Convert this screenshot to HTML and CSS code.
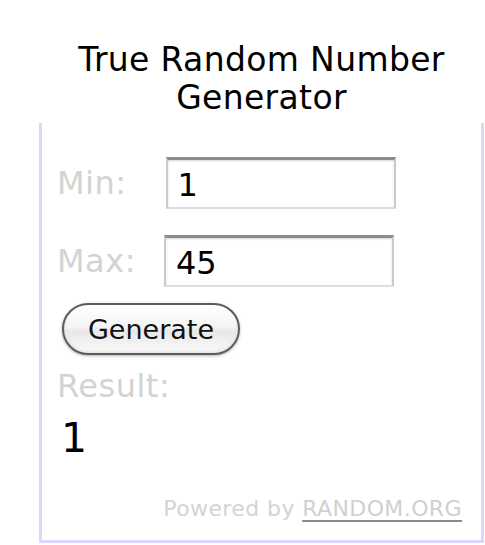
FILE: index.html
```html
<!DOCTYPE html>
<html>
<head>
<meta charset="utf-8">
<link rel="stylesheet" href="styles.css">
</head>
<body>
<div class="widget">
  <h1 class="title">True Random Number<br>Generator</h1>
  <div class="panel">
    <div class="row">
      <span class="label">Min:</span>
      <input class="field field-min" type="text" value="1">
    </div>
    <div class="row row-max">
      <span class="label">Max:</span>
      <input class="field field-max" type="text" value="45">
    </div>
    <button class="generate" type="button">Generate</button>
    <div class="result-label">Result:</div>
    <div class="result-value">1</div>
    <div class="powered">Powered by <a class="powered-link" href="#">RANDOM.ORG</a></div>
  </div>
</div>
</body>
</html>
```

FILE: styles.css
```css
html, body {
  margin: 0;
  padding: 0;
  background: #ffffff;
}

body {
  font-family: "DejaVu Sans", Verdana, sans-serif;
}

.widget {
  width: 445px;
  margin-left: 39px;
  padding-top: 41px;
}

.title {
  margin: 0 0 6px 0;
  font-size: 33px;
  line-height: 38px;
  font-weight: normal;
  letter-spacing: 0.35px;
  text-align: center;
  color: #000;
}

.panel {
  border: 3px solid #d8d8fc;
  border-top: none;
  padding: 34px 19px 18px 15px;
  display: flex;
  flex-direction: column;
  align-items: flex-start;
}

.row {
  display: flex;
  align-items: center;
  height: 52px;
}

.row-max {
  margin-top: 26px;
}

.label {
  font-size: 32px;
  line-height: 38px;
  letter-spacing: 0.5px;
  color: #d3d3d3;
}

.field {
  box-sizing: border-box;
  width: 230px;
  height: 52px;
  margin: 0;
  padding: 2px 9px 0 10px;
  font-family: "DejaVu Sans", Verdana, sans-serif;
  font-size: 32px;
  color: #000;
  background: #fff;
  border: 2px solid #cacaca;
  border-top: 3px solid #8c8c8c;
  border-bottom: 2px solid #dedede;
  box-shadow: inset 0 1px 2px rgba(0, 0, 0, 0.18);
  outline: none;
}

.field-min {
  margin-left: 39px;
}

.field-max {
  margin-left: 28px;
}

.generate {
  box-sizing: border-box;
  margin-top: 16px;
  margin-left: 5px;
  width: 178px;
  height: 52px;
  padding: 0;
  font-family: "DejaVu Sans", Verdana, sans-serif;
  font-size: 27px;
  color: #111;
  background: linear-gradient(#ffffff 0%, #f4f4f4 45%, #e8e8e8 55%, #fafafa 100%);
  border: 2px solid #5c5c5c;
  border-radius: 26px;
  box-shadow: 0 1px 3px rgba(0, 0, 0, 0.3), inset 0 -2px 3px rgba(0, 0, 0, 0.08);
}

.result-label {
  margin-top: 12px;
  font-size: 32px;
  line-height: 38px;
  letter-spacing: 0.5px;
  color: #d3d3d3;
}

.result-value {
  margin-top: 9px;
  margin-left: 4px;
  font-size: 41px;
  line-height: 48px;
  color: #000;
}

.powered {
  align-self: stretch;
  margin-top: 34px;
  font-size: 22px;
  line-height: 26px;
  letter-spacing: 0.4px;
  text-align: right;
  color: #d3d3d3;
}

.powered-link {
  color: #d0d0d0;
  text-decoration: underline;
  text-decoration-color: #8a8a8a;
  text-decoration-thickness: 2px;
  text-underline-offset: 4px;
}
```
